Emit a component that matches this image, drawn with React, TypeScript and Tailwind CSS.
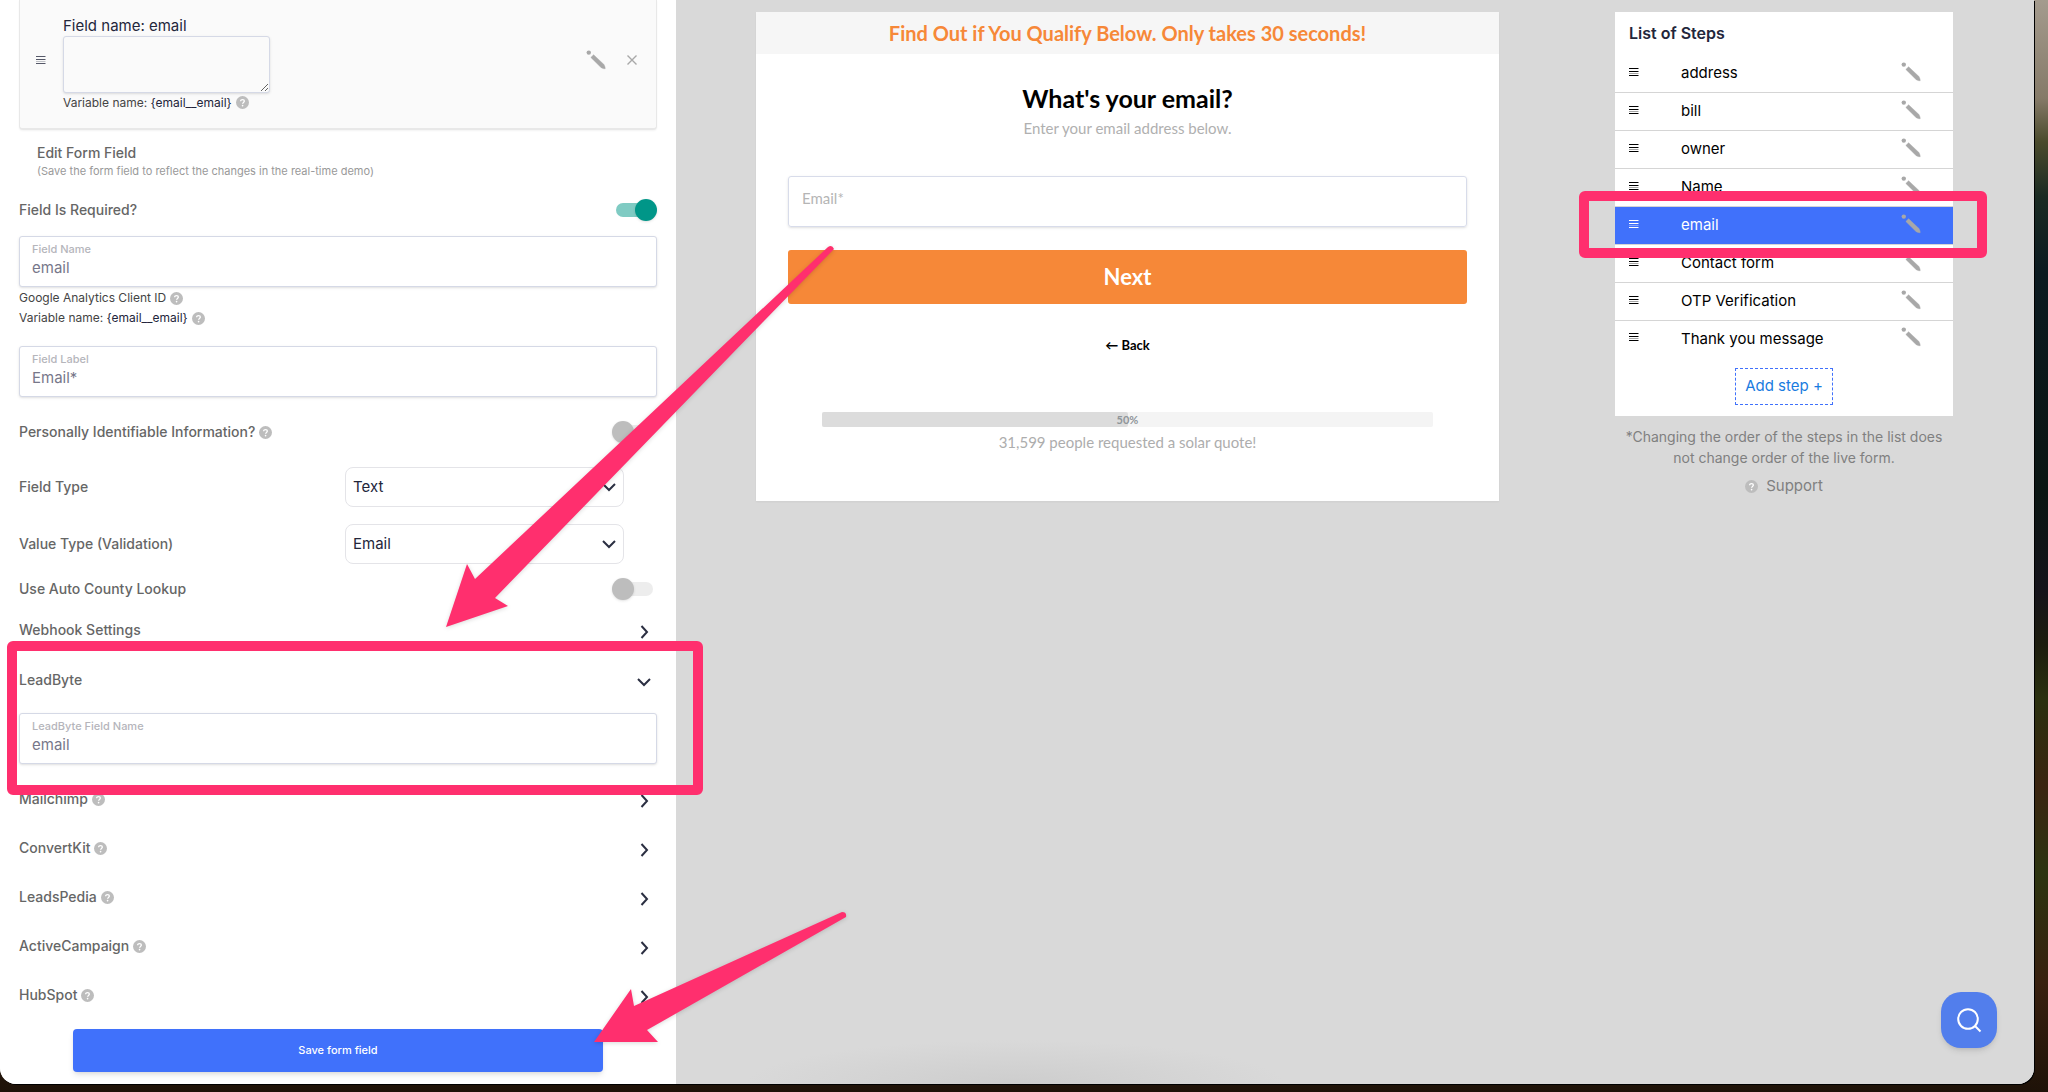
import { useId, type ReactNode } from "react";

const steps = [
  "address",
  "bill",
  "owner",
  "Name",
  "email",
  "Contact form",
  "OTP Verification",
  "Thank you message",
];

const integrations = ["Mailchimp", "ConvertKit", "LeadsPedia", "ActiveCampaign", "HubSpot"];

function HelpIcon() {
  return (
    <svg viewBox="0 0 14 14" className="size-[13px] shrink-0" aria-hidden="true">
      <circle cx="7" cy="7" r="7" fill="#bdbdbd" />
      <path
        d="M5 5.6c0-1.1.9-1.8 2-1.8s2 .7 2 1.7c0 1.4-1.9 1.4-1.9 2.8"
        fill="none"
        stroke="#fff"
        strokeWidth="1.4"
      />
      <circle cx="7.1" cy="10.3" r=".9" fill="#fff" />
    </svg>
  );
}

function GripIcon() {
  return (
    <svg viewBox="0 0 10 8" className="h-2 w-[10px] shrink-0" aria-hidden="true">
      <path d="M0 .5h9.5M0 3.5h9.5M0 7.5h9.5" stroke="currentColor" />
      <path d="M0 5.5h9.5" stroke="currentColor" opacity=".35" />
    </svg>
  );
}

function PencilIcon() {
  return (
    <svg viewBox="0 0 20 20" className="size-5" aria-hidden="true">
      <circle cx="2.8" cy="2.6" r="2.2" fill="#a8a8a8" />
      <path
        d="M4.8 7.4 7.6 4.7 18 14.6q1.2 2 1.2 4.2-2.2.1-4.2-1.3z"
        fill="#a8a8a8"
        stroke="#a8a8a8"
        strokeWidth=".4"
        strokeLinejoin="round"
      />
    </svg>
  );
}

function Chevron({ down = false }: { down?: boolean }) {
  return (
    <svg
      viewBox="0 0 14 14"
      className="size-[14px] shrink-0"
      fill="none"
      stroke="#2b2f42"
      strokeWidth="2"
      aria-hidden="true"
    >
      <path d={down ? "M1 4l6 6 6-6" : "M4.5 1l5.5 6-5.5 6"} />
    </svg>
  );
}

function TextField({ label, value }: { label: string; value: string }) {
  const id = useId();
  return (
    <div className="flex h-[51px] flex-col gap-px rounded-[3px] border border-[#d5d9e6] bg-white px-3 pt-1 shadow-sm">
      <label htmlFor={id} className="text-[11px] leading-4 font-medium text-[#b5b5bb]">
        {label}
      </label>
      <input
        id={id}
        defaultValue={value}
        className="w-full text-[15px] leading-5 text-[#77778a] outline-none"
      />
    </div>
  );
}

function Toggle({ label, on = false, help = false }: { label: string; on?: boolean; help?: boolean }) {
  const id = useId();
  return (
    <div className="flex h-6 items-center justify-between">
      <div className="flex items-center gap-1">
        <label htmlFor={id} className="text-sm font-medium text-[#666]">
          {label}
        </label>
        {help ? <HelpIcon /> : null}
      </div>
      <span className="relative flex h-[22px] w-[45px] items-center px-1">
        <input
          id={id}
          type="checkbox"
          defaultChecked={on}
          className="peer h-[14px] w-full appearance-none rounded-full bg-[#ededed] checked:bg-[#7fcbc3]"
        />
        <span className="pointer-events-none absolute left-0 size-[22px] rounded-full bg-[#bdbdbd] shadow peer-checked:right-0 peer-checked:left-auto peer-checked:bg-[#009688]" />
      </span>
    </div>
  );
}

function SelectRow({ label, value }: { label: string; value: string }) {
  const id = useId();
  return (
    <div className="flex items-center justify-between pr-[33px]">
      <label htmlFor={id} className="text-sm font-medium text-[#666]">
        {label}
      </label>
      <div className="relative flex w-[279px] items-center">
        <select
          id={id}
          defaultValue={value}
          className="h-10 w-full appearance-none rounded-lg border border-[#e4e4e8] bg-white px-[7px] text-[15px] text-[#23263b]"
        >
          <option>{value}</option>
        </select>
        <span className="pointer-events-none absolute right-2">
          <Chevron down />
        </span>
      </div>
    </div>
  );
}

function AccordionRow({ label, open = false, help = false }: { label: string; open?: boolean; help?: boolean }) {
  return (
    <button
      type="button"
      aria-expanded={open}
      className="flex h-6 w-full items-center justify-between pr-[6px] text-left text-sm font-medium text-[#666]"
    >
      <span className="flex items-center gap-1">
        {label}
        {help ? <HelpIcon /> : null}
      </span>
      <span className="pt-1">
        <Chevron down={open} />
      </span>
    </button>
  );
}

function Hint({ children }: { children: ReactNode }) {
  return (
    <p className="flex items-center gap-1 text-xs leading-5 text-[#444]">
      {children}
      <HelpIcon />
    </p>
  );
}

function Highlight({ className }: { className: string }) {
  return (
    <div
      className={`pointer-events-none absolute z-10 rounded-md border-10 border-[#ff2f6e] ${className}`}
    />
  );
}

function FieldEditor() {
  return (
    <section className="bg-white px-[19px] pb-3">
      <div className="flex h-[130px] items-center rounded-b-sm border-x border-b-2 border-[#e8e8e8] bg-[#fafafa] pr-[18px] pl-4 text-[#555868] shadow-xs">
        <div className="pb-2">
          <GripIcon />
        </div>
        <div className="flex-1 pl-[17px]">
          <label htmlFor="preview-field" className="block text-[15px] leading-5 text-[#23263b]">
            Field name: email
          </label>
          <textarea
            id="preview-field"
            className="block h-[57px] w-[207px] rounded-[3px] border border-[#d5d9e6] bg-[#fafafa] shadow-sm"
          />
          <Hint>
            <span>
              Variable name: <span className="text-[#23263b]">{"{email__email}"}</span>
            </span>
          </Hint>
        </div>
        <div className="flex items-center gap-5 pb-2">
          <button type="button" aria-label="Edit field">
            <PencilIcon />
          </button>
          <button type="button" aria-label="Remove field">
            <svg viewBox="0 0 12 12" className="size-3" stroke="#a8a8a8" strokeWidth="1.4" aria-hidden="true">
              <path d="M1.5 1.5l9 9M10.5 1.5l-9 9" />
            </svg>
          </button>
        </div>
      </div>

      <div className="mt-[13px] px-[18px]">
        <h2 className="text-sm font-medium text-[#666]">Edit Form Field</h2>
        <p className="text-[11px] leading-4 text-[#999]">
          (Save the form field to reflect the changes in the real-time demo)
        </p>
      </div>

      <div className="mt-[19px] mb-[14px]">
        <Toggle label="Field Is Required?" on />
      </div>
      <TextField label="Field Name" value="email" />
      <div className="mt-px">
        <Hint>Google Analytics Client ID</Hint>
        <Hint>
          <span>
            Variable name: <span className="text-[#23263b]">{"{email__email}"}</span>
          </span>
        </Hint>
      </div>

      <div className="mt-[18px] flex flex-col gap-[23px]">
        <TextField label="Field Label" value="Email*" />
        <Toggle label="Personally Identifiable Information?" help />
        <div className="flex flex-col gap-[17px]">
          <SelectRow label="Field Type" value="Text" />
          <SelectRow label="Value Type (Validation)" value="Email" />
        </div>
      </div>
      <div className="mt-[13px] flex flex-col gap-[17px]">
        <Toggle label="Use Auto County Lookup" />
        <AccordionRow label="Webhook Settings" />
      </div>

      <div className="relative mt-[26px] mb-[23px] flex flex-col gap-[21px]">
        <AccordionRow label="LeadByte" open />
        <TextField label="LeadByte Field Name" value="email" />
        <Highlight className="-top-[27px] -right-[46px] -bottom-[31px] -left-3" />
      </div>

      <div className="flex flex-col gap-[25px]">
        {integrations.map((name) => (
          <AccordionRow key={name} label={name} help />
        ))}
      </div>

      <div className="mt-[22px] px-[54px]">
        <button
          type="button"
          className="h-[43px] w-full rounded bg-[#4071fb] text-[11px] font-medium text-white shadow-md"
        >
          Save form field
        </button>
      </div>
    </section>
  );
}

function FormPreview() {
  return (
    <section className="flex-1 self-start bg-white pb-12 text-center font-['Lato',sans-serif] shadow-xs">
      <p className="bg-[#f6f6f6] text-[20px] leading-[42px] font-bold text-[#f68838]">
        Find Out if You Qualify Below. Only takes 30 seconds!
      </p>
      <div className="px-8 pt-7">
        <h1 className="text-[25px] leading-8 font-bold text-black">What's your email?</h1>
        <p className="mt-0.5 text-[15px] leading-6 text-[#b0b0b0]">Enter your email address below.</p>
        <input
          aria-label="Email"
          placeholder="Email*"
          className="mt-9 h-[51px] w-full rounded-[3px] border border-[#d8dcea] px-[13px] pb-2 text-[15px] shadow-sm outline-none placeholder:text-[#b5b5b5]"
        />
        <button
          type="button"
          className="mt-[23px] h-[54px] w-full rounded-[3px] bg-[#f68838] pb-0.5 text-[22px] font-bold text-white"
        >
          Next
        </button>
        <button type="button" className="mt-[31px] text-[13px] leading-5 font-bold text-black">
          ← Back
        </button>
        <div className="mt-14 px-[34px]">
          <div className="relative h-[15px] rounded-xs bg-[#f4f4f4]">
            <div className="h-full w-1/2 rounded-xs bg-[#dcdcdc]" />
            <span className="absolute inset-0 text-[11px] leading-[15px] font-bold text-[#8f9599]">50%</span>
          </div>
          <p className="mt-1 text-[15px] leading-[22px] text-[#adadad]">31,599 people requested a solar quote!</p>
        </div>
      </div>
    </section>
  );
}

function StepList() {
  return (
    <aside className="w-[338px] shrink-0">
      <div className="bg-white pb-[11px]">
        <h2 className="px-[14px] pt-[9px] pb-[10px] text-base font-semibold text-[#23263b]">List of Steps</h2>
        <ul>
          {steps.map((step) => {
            const active = step === "email";
            return (
              <li
                key={step}
                className={`relative flex h-[38px] items-center border-b border-[#d5d5d5] pr-8 pl-[14px] text-[15px] last:h-9 last:border-b-0 ${
                  active ? "bg-[#4071fb] text-white" : "text-black"
                }`}
              >
                <div className="pb-1">
                  <GripIcon />
                </div>
                <span className="flex-1 pl-[42px]">{step}</span>
                <button type="button" aria-label={`Edit ${step}`} className="pb-1">
                  <PencilIcon />
                </button>
                {active ? <Highlight className="-top-4 -right-[34px] -bottom-[14px] -left-9" /> : null}
              </li>
            );
          })}
        </ul>
        <div className="mt-[11px] flex justify-center">
          <button
            type="button"
            className="h-[37px] border border-dashed border-[#4071fb] px-[9px] text-[15px] text-[#1a7ce0]"
          >
            Add step +
          </button>
        </div>
      </div>
      <p className="mt-[10px] text-center text-sm leading-[21px] text-[#808080]">
        *Changing the order of the steps in the list does
        <br />
        not change order of the live form.
      </p>
      <a href="#support" className="mt-2 flex items-center justify-center gap-2 text-[15px] leading-5 text-[#808080]">
        <HelpIcon />
        Support
      </a>
    </aside>
  );
}

// Hand-placed pointers that sit above the whole window
function Arrows() {
  return (
    <svg
      className="pointer-events-none absolute top-0 left-0 z-20 h-[1084px] w-[860px] drop-shadow-sm"
      viewBox="0 0 860 1084"
      fill="#ff2f6e"
      aria-hidden="true"
    >
      <path d="M446 627 467 564 475 579 828 247Q832 244 834 249L495 598 508 606Z" />
      <path d="M594 1042 631 989 634 1006 842 912Q847 912 846 917L647 1030 658 1042Z" />
    </svg>
  );
}

export default function App() {
  return (
    <div className="min-h-screen bg-[linear-gradient(180deg,#a49b8e_0%,#857a68_9%,#4a4a2c_13%,#1a2a22_18%,#0b1a20_25%,#0a1512_45%,#14131a_54%,#1c1c0e_59%,#2a300f_64%,#3a2410_72%,#2c3410_80%,#38200f_90%,#1e1208_100%)] pr-[14px] pb-2 font-['Inter',sans-serif]">
      <main className="relative grid grid-cols-[676fr_1358fr] overflow-hidden rounded-b-2xl bg-[#d9d9d9] shadow-[1px_1px_0_#000]">
        <FieldEditor />
        <div className="flex items-start gap-[116px] bg-[radial-gradient(ellipse_270px_44px_at_25%_100%,#cdcdcd,#d9d9d9)] pt-3 pr-[81px] pl-20">
          <FormPreview />
          <StepList />
        </div>
        <button
          type="button"
          aria-label="Search help"
          className="absolute right-[37px] bottom-9 flex size-14 items-center justify-center rounded-[20px] bg-[#527eec] shadow-md"
        >
          <svg viewBox="0 0 26 26" className="size-[26px]" fill="none" stroke="#fff" strokeWidth="2" aria-hidden="true">
            <circle cx="12" cy="12" r="9.8" />
            <path d="M19 19l5.5 5.5" />
          </svg>
        </button>
        <Arrows />
      </main>
    </div>
  );
}
